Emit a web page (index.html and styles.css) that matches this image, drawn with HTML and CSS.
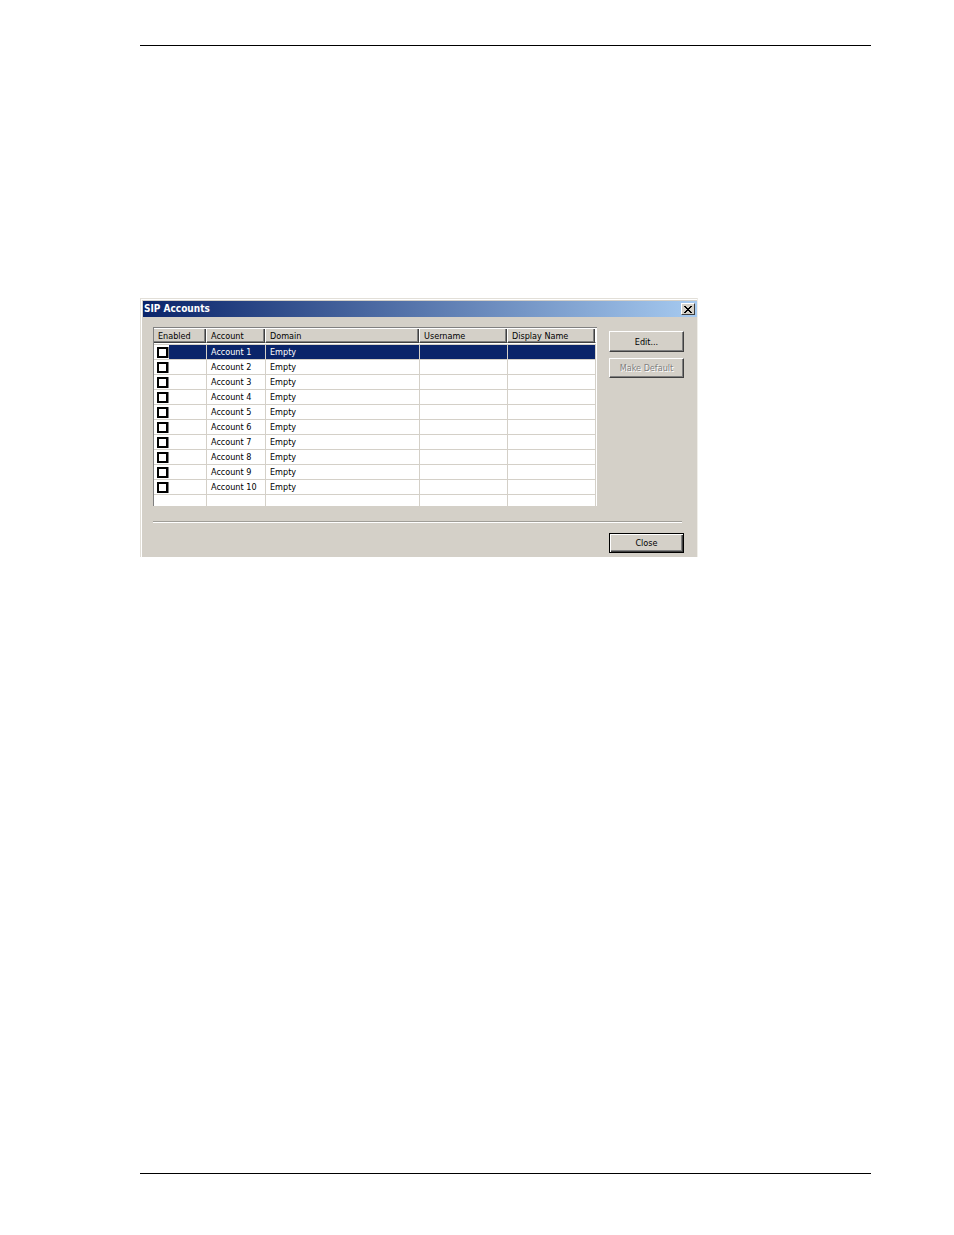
FILE: index.html
```html
<!DOCTYPE html>
<html lang="en">
  <head>
    <meta charset="UTF-8" />
    <meta name="viewport" content="width=device-width, initial-scale=1.0" />
    <title>SIP Accounts</title>
    <link rel="stylesheet" href="styles.css">
  </head>
  <body>
    <hr class="page-rule">
    <main class="dialog" role="dialog" aria-labelledby="dialog-title">
      <div class="title-bar">
        <h1 id="dialog-title">SIP Accounts</h1>
        <button class="close-icon" type="button" aria-label="Close window">
          <svg width="8" height="7" viewBox="0 0 8 7" shape-rendering="crispEdges" aria-hidden="true">
            <path d="M0 0h2v1h1v1h2V1h1V0h2v1H7v1H6v1H5v1h1v1h1v1h1v1H6V6H5V5H3v1H2v1H0V6h1V5h1V4h1V3H2V2H1V1H0z" />
          </svg>
        </button>
      </div>
      <div class="dialog-body">
        <div class="account-area">
          <div class="list">
            <table>
              <colgroup>
                <col class="col-enabled">
                <col class="col-account">
                <col class="col-domain">
                <col class="col-user">
                <col class="col-display">
              </colgroup>
              <thead>
                <tr><th>Enabled</th><th>Account</th><th>Domain</th><th>Username</th><th>Display Name</th></tr>
              </thead>
              <tbody>
                <tr class="spacer"><td colspan="5"></td></tr>
                <tr class="selected"><td><input type="checkbox" aria-labelledby="a1"></td><td id="a1">Account 1</td><td>Empty</td><td></td><td></td></tr>
                <tr><td><input type="checkbox" aria-labelledby="a2"></td><td id="a2">Account 2</td><td>Empty</td><td></td><td></td></tr>
                <tr><td><input type="checkbox" aria-labelledby="a3"></td><td id="a3">Account 3</td><td>Empty</td><td></td><td></td></tr>
                <tr><td><input type="checkbox" aria-labelledby="a4"></td><td id="a4">Account 4</td><td>Empty</td><td></td><td></td></tr>
                <tr><td><input type="checkbox" aria-labelledby="a5"></td><td id="a5">Account 5</td><td>Empty</td><td></td><td></td></tr>
                <tr><td><input type="checkbox" aria-labelledby="a6"></td><td id="a6">Account 6</td><td>Empty</td><td></td><td></td></tr>
                <tr><td><input type="checkbox" aria-labelledby="a7"></td><td id="a7">Account 7</td><td>Empty</td><td></td><td></td></tr>
                <tr><td><input type="checkbox" aria-labelledby="a8"></td><td id="a8">Account 8</td><td>Empty</td><td></td><td></td></tr>
                <tr><td><input type="checkbox" aria-labelledby="a9"></td><td id="a9">Account 9</td><td>Empty</td><td></td><td></td></tr>
                <tr><td><input type="checkbox" aria-labelledby="a10"></td><td id="a10">Account 10</td><td>Empty</td><td></td><td></td></tr>
                <tr class="rest"><td></td><td></td><td></td><td></td><td></td></tr>
              </tbody>
            </table>
          </div>
          <div class="actions">
            <button class="btn" type="button">Edit...</button>
            <button class="btn" type="button" disabled>Make Default</button>
          </div>
        </div>
        <hr class="separator">
        <div class="dialog-footer">
          <button class="btn btn-default" type="button">Close</button>
        </div>
      </div>
    </main>
    <hr class="page-rule bottom">
  </body>
</html>
```
FILE: styles.css
```css
* {
  box-sizing: border-box;
}

body {
  display: flex;
  flex-direction: column;
  min-height: 100vh;
  margin: 0;
  padding: 45px 83px 61px 140px;
  background: #fff;
  color: #000;
  font-family: "DejaVu Sans Condensed", "DejaVu Sans", sans-serif;
  font-size: 9px;
  line-height: 12px;
}

.page-rule {
  width: 100%;
  height: 1px;
  margin: 0;
  border: 0;
  background: #000;
}

.page-rule.bottom {
  margin-top: auto;
}

/* dialog window */
.dialog {
  width: 100%;
  max-width: 558px;
  margin-top: 252px;
  border: 1px solid #e2dfd8;
  border-right-color: #f0eee9;
  border-bottom: 0;
  background: #d4d0c8;
  box-shadow: inset 1px 1px #fff;
}

.title-bar {
  display: flex;
  align-items: center;
  justify-content: space-between;
  height: 16px;
  margin: 2px 0 0 2px;
  padding: 0 2px 0 1px;
  background: linear-gradient(to right, #0a246a, #a6caf0);
}

.title-bar h1 {
  margin: 0;
  color: #fff;
  font-size: 10px;
  font-weight: bold;
}

.close-icon {
  display: flex;
  align-items: center;
  justify-content: center;
  width: 14px;
  height: 12px;
  padding: 0;
  border: 1px solid #404040;
  border-top-color: #fff;
  border-left-color: #fff;
  background: #d4d0c8;
}

.dialog-body {
  padding: 10px 13px 4px 12px;
}

.account-area {
  display: flex;
  gap: 12px;
}

/* account list */
.list {
  flex: 1;
  padding-right: 1px;
  border-top: 1px solid #808080;
  border-left: 1px solid #808080;
  background: #fff;
}

table {
  width: 100%;
  table-layout: fixed;
  border-spacing: 0;
}

.col-enabled {
  width: 12%;
}

.col-account {
  width: 59px;
}

.col-domain {
  width: 154px;
}

.col-user,
.col-display {
  width: 88px;
}

th {
  height: 15px;
  padding: 1px 4px 0;
  border-top: 1px solid #fff;
  border-right: 1px solid #fff;
  border-bottom: 1px solid #404040;
  background: #d4d0c8;
  box-shadow: inset -1px 0 #404040, inset -2px -1px #808080;
  font-weight: normal;
  line-height: 12px;
  text-align: left;
  white-space: nowrap;
}

td {
  height: 15px;
  padding: 1px 4px 0;
  border-right: 1px solid #d4d0c8;
  border-bottom: 1px solid #d4d0c8;
  line-height: 13px;
  white-space: nowrap;
}

td:first-child {
  padding: 0 3px;
}

.spacer td {
  height: 2px;
  border-right: 0;
}

.rest td {
  height: 11px;
  border-bottom: 0;
}

.selected td {
  background: #0a246a;
  color: #fff;
}

.selected td:first-child {
  background: linear-gradient(to right, #fff 15px, #0a246a 15px);
}

input[type="checkbox"] {
  display: block;
  appearance: none;
  width: 11px;
  height: 11px;
  margin: 2px 0 1px;
  border: 2px solid #000;
  background: #fff;
  box-shadow: 1px 0 #808080;
}

/* buttons */
.actions {
  display: flex;
  flex-direction: column;
  gap: 6px;
  padding-top: 4px;
}

.btn {
  width: 75px;
  height: 21px;
  padding: 0;
  border: 1px solid #404040;
  border-top-color: #fff;
  border-left-color: #fff;
  background: #d4d0c8;
  box-shadow: inset -1px -1px #808080;
  color: #000;
  font: inherit;
}

.btn:disabled {
  height: 20px;
  color: #808080;
  text-shadow: 1px 1px #fff;
}

.btn-default {
  height: 20px;
  border-color: #000;
  box-shadow: inset 1px 1px #fff, inset -1px -1px #404040, inset -2px -2px #808080;
}

.separator {
  height: 2px;
  margin: 15px 2px 10px 0;
  border: 0;
  border-top: 1px solid #a09e98;
  background: #fff;
}

.dialog-footer {
  display: flex;
  justify-content: flex-end;
}
```
